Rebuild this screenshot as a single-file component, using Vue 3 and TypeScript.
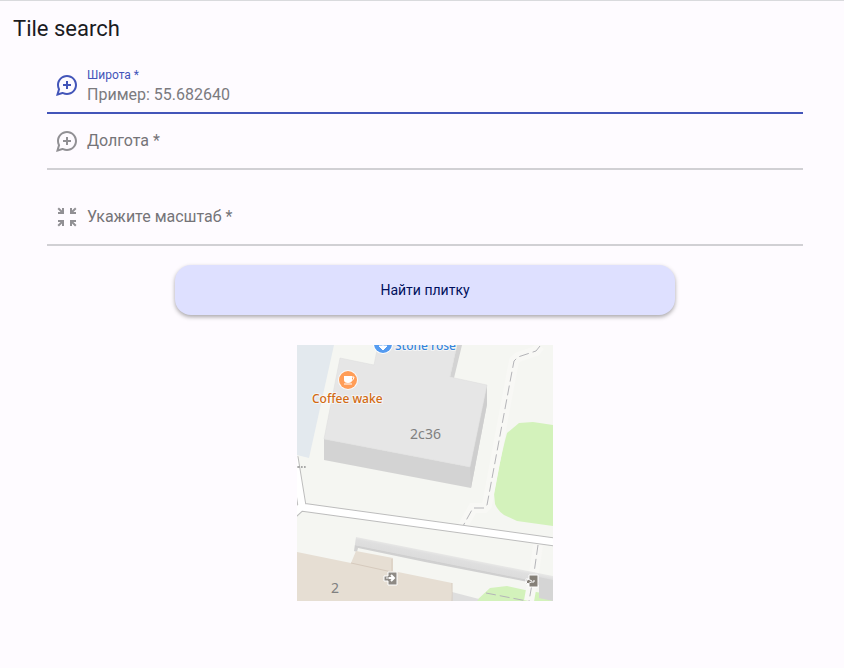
<script setup lang="ts">
import { reactive, ref } from 'vue'

type FieldKey = 'latitude' | 'longitude' | 'zoom'

interface Field {
  key: FieldKey
  label: string
  placeholder: string
  icon: string
}

const pinIcon =
  'M12 2C6.48 2 2 6.48 2 12c0 1.54.36 2.98.97 4.29L1 23l6.71-1.97C9.02 21.64 10.46 22 12 22c5.52 0 10-4.48 10-10S17.52 2 12 2zM12 20c-1.18 0-2.34-.27-3.43-.78l-.67-.32-.71.21-3.22.95.95-3.22.21-.71-.32-.67C4.27 14.34 4 13.18 4 12c0-4.41 3.59-8 8-8s8 3.59 8 8-3.59 8-8 8zM13 8h-2v3H8v2h3v3h2v-3h3v-2h-3z'
const scaleIcon =
  'M9 9V3H7v2.59L3.91 2.5 2.5 3.91 5.59 7H3v2zM21 9V7h-2.59l3.09-3.09-1.41-1.41L17 5.59V3h-2v6zM3 15v2h2.59L2.5 20.09l1.41 1.41L7 18.41V21h2v-6zM15 15v6h2v-2.59l3.09 3.09 1.41-1.41L18.41 17H21v-2z'

const fields: Field[] = [
  { key: 'latitude', label: 'Широта *', placeholder: 'Пример: 55.682640', icon: pinIcon },
  { key: 'longitude', label: 'Долгота *', placeholder: '', icon: pinIcon },
  { key: 'zoom', label: 'Укажите масштаб *', placeholder: '', icon: scaleIcon },
]

const values = reactive<Record<FieldKey, string>>({ latitude: '', longitude: '', zoom: '' })
const active = ref<FieldKey>('latitude')
</script>

<template>
  <div class="page">
    <header class="bar">
      <h1>Tile search</h1>
    </header>
    <main class="content">
      <form class="form" @submit.prevent>
        <div
          v-for="field in fields"
          :key="field.key"
          class="field"
          :class="[field.key, { active: active === field.key, floating: active === field.key || values[field.key] }]"
        >
          <svg class="icon" viewBox="0 0 24 24" aria-hidden="true">
            <path :d="field.icon" fill-rule="evenodd" />
          </svg>
          <div class="entry">
            <label :for="field.key">{{ field.label }}</label>
            <input
              :id="field.key"
              v-model="values[field.key]"
              type="text"
              :placeholder="field.placeholder"
              required
              @focus="active = field.key"
            />
          </div>
        </div>
        <button type="submit" class="submit">Найти плитку</button>
      </form>

      <svg class="tile" viewBox="0 0 256 256" role="img">
        <defs>
          <linearGradient id="wall" x1="158" y1="209" x2="155" y2="224" gradientUnits="userSpaceOnUse">
            <stop offset="0" stop-color="#efefed" />
            <stop offset="0.35" stop-color="#dfdfdf" />
            <stop offset="0.7" stop-color="#dcdcdc" />
            <stop offset="0.75" stop-color="#cfcfcf" />
            <stop offset="1" stop-color="#d2d2d2" />
          </linearGradient>
        </defs>
        <rect width="256" height="256" fill="#f5f6f2" />
        <path d="M0 0H37L12 113L0 110Z" fill="#e3e9ee" />

        <path d="M256 80L236 77L222 78L210 88Q206 103 202 122L197 148L198 159Q201 166 207 170L220 176L256 181Z" fill="#d3f2bb" />
        <path d="M179 256L193 243L210 241L228 245L256 250V256Z" fill="#d3f2bb" />

        <g fill="none" stroke="#f8f8f5" stroke-width="10">
          <path d="M243 1L239 6L221 12L217 16L213 37L190 160L187 163L176 163L166 181" />
          <path d="M241 200L237 228L232 256" />
        </g>
        <g fill="none" stroke="#b4b4b8" stroke-width="1" stroke-dasharray="10 4">
          <path d="M243 1L239 6L221 12L217 16L213 37L190 160L187 163" />
          <path d="M187 163H176L166 181" />
          <path d="M241 200L237 228L232 256" />
          <path d="M189 248L230 256" />
        </g>

        <path d="M-3 112L5 161L-6 171M4 162L258 197" fill="none" stroke="#bdbdbd" stroke-width="9" />
        <path d="M-3 112L5 161L-6 171M4 162L258 197" fill="none" stroke="#fff" stroke-width="7" />

        <path d="M160 0H165L157 33L153 32ZM190 40V59L174 143L27 115V94L173 122Z" fill="#d3d3d3" />
        <path d="M173 122L190 40V59L174 143Z" fill="#cecece" />
        <path d="M43 13L77 20L81 0H160L153 32L190 40L173 122L27 94Z" fill="#e6e6e6" stroke="#dcdcdc" stroke-width="0.5" />

        <path d="M59 192L256 231V244L231 237L128 217L61 203L60 207L57 206Z" fill="url(#wall)" />
        <path d="M155 247L182 254L180 256H154Z" fill="#dedede" />
        <path d="M242 232L256 235V256L242 253Z" fill="#d5d5d5" />
        <path d="M0 207L54 218L59 206L96 213V226L155 238L154 256H0Z" fill="#e6ded3" />
        <path d="M54 218L95 227M95 214V227M155 238V256" fill="none" stroke="#d6cabd" stroke-width="1" />

        <path d="M91 227H100V240H91V236H87V231H91Z" fill="#8e8a85" stroke="#fff" stroke-width="1" />
        <path d="M89 233H97M94 230L97 233L94 236" fill="none" stroke="#fff" stroke-width="2" />
        <path d="M88 233H92" fill="none" stroke="#8e8a85" stroke-width="1" />
        <path d="M232 230H241V242H232V239H229V234H232Z" fill="#858078" stroke="#fff" stroke-width="1" />
        <path d="M235 236L231 234L229 237L231 239L234 237H237V235" fill="none" stroke="#fff" stroke-width="1" />
        <path d="M0 122H2M4 122H5M7 122H8M2 121V123M5 121V123M8 121V123" stroke="#8f8f8f" stroke-width="1" />

        <circle cx="86" cy="-1" r="10" fill="#fff" />
        <circle cx="86" cy="-1" r="9" fill="#559bf0" />
        <path d="M82 1H90L86 5ZM86 -3V2" fill="#fff" stroke="#fff" stroke-width="1" />
        <circle cx="51" cy="35" r="10" fill="#fff" opacity="0.8" />
        <circle cx="51" cy="35" r="9" fill="#ff9d57" />
        <path d="M47 31H55V35Q55 38 51 38Q47 38 47 35Z" fill="#fff" />
        <path d="M55 32H57Q57 35 54 36" fill="none" stroke="#fff" stroke-width="1" />
        <path d="M47 39H55" stroke="#fff" stroke-width="1" />
        <g class="place">
          <text x="98" y="5">Stone rose</text>
          <text x="15" y="58" class="cafe">Coffee wake</text>
        </g>
        <g class="house">
          <text x="113" y="94">2с36</text>
          <text x="34" y="248">2</text>
        </g>
      </svg>
    </main>
  </div>
</template>

<style>
body {
  margin: 0;
  background: #fefbff;
}
</style>

<style scoped>
.page {
  border-top: 1px solid #d9dadd;
  color: #1b1b1f;
  font-family: Roboto, "Noto Sans", sans-serif;
}

.bar {
  padding: 14px 13px 12px;
}

h1 {
  margin: 0;
  font-size: 22px;
  font-weight: 400;
  line-height: 28px;
}

.content {
  display: flex;
  flex-direction: column;
  align-items: center;
  gap: 30px;
  padding: 3px 41px 30px 47px;
}

.form {
  display: flex;
  flex-direction: column;
  align-self: stretch;
}

.field {
  display: flex;
  align-items: center;
  gap: 8px;
  box-sizing: border-box;
  height: 56px;
  padding-left: 8px;
  border-bottom: 2px solid #d1d0d4;
  color: #919094;
}

.field.zoom {
  margin-top: 20px;
}

.field.active {
  border-color: #4355b9;
  color: #4355b9;
}

.icon {
  width: 24px;
  height: 24px;
  fill: currentColor;
}

.entry {
  display: grid;
  flex: 1;
  height: 54px;
}

label,
input {
  grid-area: 1 / 1;
  font-size: 16px;
}

label {
  align-self: center;
  justify-self: start;
  line-height: 20px;
  color: #757478;
}

.floating label {
  align-self: start;
  padding-top: 7px;
  font-size: 12px;
}

.active label {
  color: #4355b9;
}

input {
  box-sizing: border-box;
  width: 100%;
  padding: 18px 0 0;
  border: 0;
  outline: 0;
  background: transparent;
  color: #1b1b1f;
  font-family: inherit;
}

input::placeholder {
  color: #7b7a7e;
  opacity: 1;
}

.submit {
  align-self: center;
  width: 100%;
  max-width: 500px;
  height: 50px;
  margin-top: 19px;
  border: 0;
  border-radius: 16px;
  background: #dee0ff;
  box-shadow: 0 2px 4px rgba(0, 0, 0, 0.34);
  color: #00105c;
  font-family: inherit;
  font-size: 14px;
  font-weight: 400;
}

.tile {
  display: block;
  width: 256px;
  height: 256px;
}

.tile text {
  font-family: "Noto Sans", sans-serif;
}

.place text {
  fill: #3586dc;
  font-size: 12px;
  font-weight: 500;
  stroke: #fff;
  stroke-width: 2px;
  stroke-opacity: 0.6;
  paint-order: stroke;
}

.place .cafe {
  fill: #d26a12;
}

.house text {
  fill: #808080;
  font-size: 14px;
}
</style>
